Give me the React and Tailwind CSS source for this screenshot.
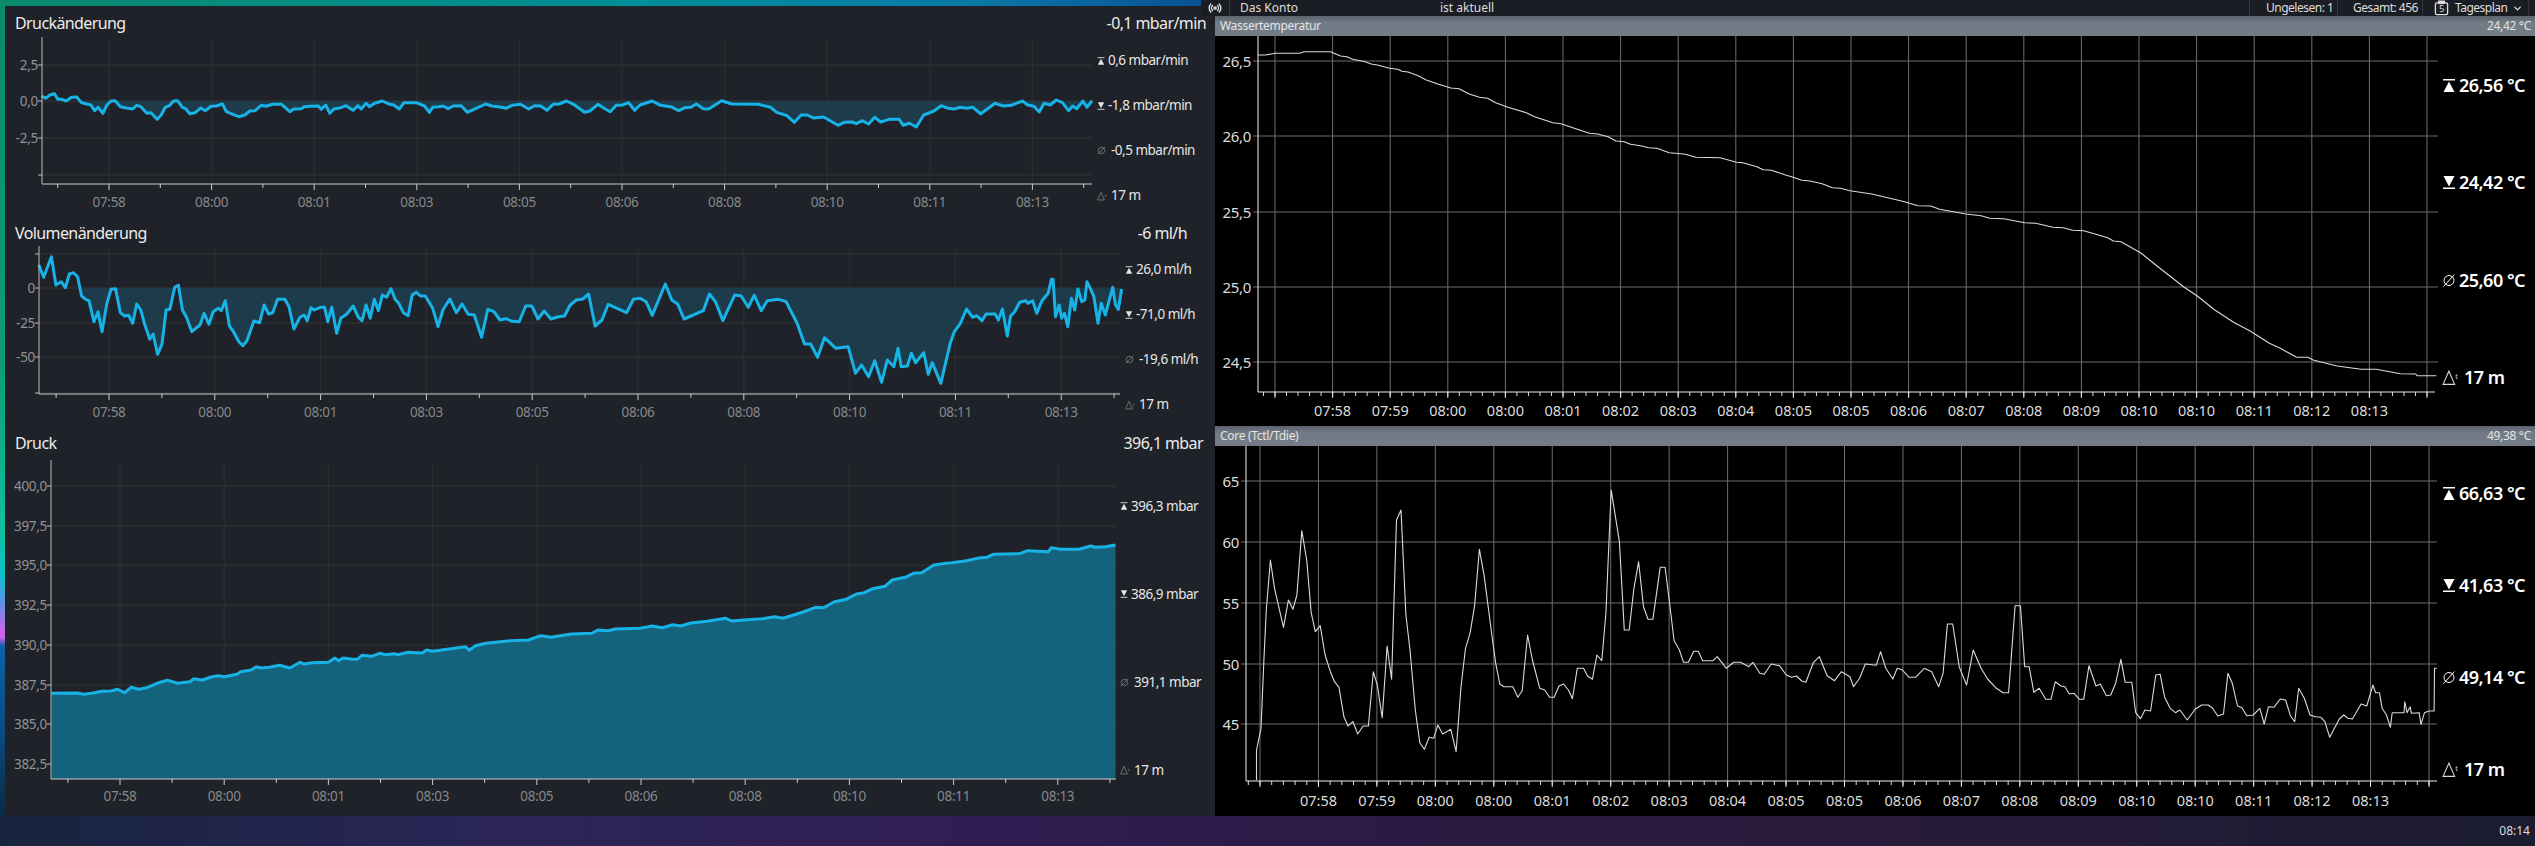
import React from 'react';
import { Radio, ChevronDown } from 'lucide-react';

// helper: points were read off 3x crops, x gets its own scale
const trace = (pts, ox, oy, sx) => pts.map(([x, y]) => [ox + x / sx, oy + y / 3]);
const toPath = pts => pts.map(([x, y]) => `${x.toFixed(1)},${y.toFixed(1)}`).join(' ');

const pressureRate = [
  ...trace([[102,288],[112,295],[122,285],[133,281],[142,298],[152,298],[162,303],[175,292],[188,291],[200,308],[215,313],[222,314],[232,332],[240,322],[252,340],[262,315],[272,303],[282,302],[295,320],[310,324],[325,327],[335,316],[345,320],[360,340],[370,338],[385,358],[395,345],[405,322],[415,317],[425,303],[435,302],[447,322],[455,326],[465,341],[478,338],[492,324],[503,332],[517,319],[530,318],[545,312],[555,335],[570,343],[585,350],[600,345],[612,333],[625,332],[640,316],[652,319],[668,313],[690,313],[710,335],[720,327],[738,326],[745,320],[760,319],[780,318],[787,328],[798,315],[808,340],[818,327],[835,323],[848,317],[865,331],[877,317],[885,327],[897,310],[905,320],[918,310],[937,303],[955,313],[965,315],[978,327],[990,308],[1020,308],[1040,318],[1052,337],[1060,322],[1075,320],[1085,318],[1098,326],[1110,318],[1130,317],[1145,337],[1165,326],[1190,312],[1205,318],[1225,321],[1240,325],[1255,316],[1275,313],[1295,327],[1310,317],[1325,318],[1340,331],[1355,313],[1370,312],[1388,303],[1405,313],[1432,337],[1445,333],[1465,313],[1480,325],[1495,335],[1510,316],[1525,315],[1540,308],[1555,331],[1568,315]], 0, 0, 2.45),
  ...trace([[30,303],[50,316],[75,320],[95,332],[110,323],[125,322],[138,312],[155,326],[168,327],[180,318],[200,302],[225,312],[290,313],[320,322],[335,337],[360,347],[378,367],[395,345],[410,345],[425,354],[450,351],[470,365],[485,376],[500,367],[520,366],[530,371],[545,362],[560,372],[575,352],[590,366],[610,358],[635,358],[645,376],[660,370],[677,381],[695,345],[720,333],[738,317],[755,325],[770,327],[785,322],[800,325],[815,322],[835,341],[850,328],[870,310],[890,318],[910,316],[937,303],[950,315],[965,319],[978,336],[990,310],[1005,315],[1020,300],[1035,308],[1050,332],[1060,318],[1070,326],[1085,303],[1095,322],[1108,302]], 640, 0, 2.45),
];

const volumeRate = [
  ...trace([[95,165],[107,202],[126,140],[137,225],[150,215],[160,233],[170,192],[180,188],[190,200],[200,258],[210,268],[218,272],[230,335],[240,305],[250,365],[262,280],[272,238],[283,236],[295,308],[305,318],[315,316],[325,340],[335,282],[345,300],[355,345],[367,388],[375,372],[386,433],[397,402],[407,300],[416,298],[428,232],[437,226],[447,300],[457,322],[470,365],[490,345],[500,310],[512,343],[522,305],[535,295],[542,302],[552,272],[562,348],[572,365],[585,395],[595,407],[605,392],[622,333],[636,338],[647,285],[658,312],[668,308],[680,268],[698,268],[708,290],[720,357],[735,322],[745,315],[753,332],[762,293],[770,300],[785,292],[795,292],[803,335],[813,292],[825,370],[835,325],[850,312],[865,288],[878,322],[887,332],[897,285],[907,325],[917,268],[927,302],[937,255],[947,262],[958,236],[968,268],[977,280],[988,308],[1000,317],[1010,255],[1020,247],[1030,258],[1042,258],[1060,295],[1073,350],[1085,300],[1102,267],[1118,308],[1132,282],[1147,313],[1162,315],[1180,382],[1195,298],[1210,305],[1225,330],[1240,326],[1255,334],[1272,335],[1288,288],[1303,288],[1318,327],[1333,303],[1350,327],[1368,320],[1383,318],[1397,285],[1412,270],[1428,267],[1442,252],[1458,348],[1475,330],[1490,283],[1535,308],[1552,268],[1568,265]], 0, 210, 2.45),
  ...trace([[15,275],[30,316],[62,222],[78,270],[92,282],[108,327],[125,318],[155,302],[170,252],[185,275],[203,332],[232,255],[248,258],[265,292],[280,256],[297,302],[312,272],[340,268],[358,275],[385,340],[403,402],[418,402],[435,442],[452,383],[480,415],[510,410],[528,490],[543,465],[560,500],[575,452],[592,517],[606,450],[622,470],[632,415],[640,470],[655,468],[665,430],[675,458],[695,428],[706,493],[716,458],[737,520],[760,400],[770,365],[785,340],[800,297],[815,322],[825,317],[838,332],[848,312],[870,312],[878,330],[888,297],[900,378],[908,318],[918,305],[930,277],[945,272],[950,280],[962,272],[972,310],[985,272],[1000,250],[1008,208],[1012,208],[1018,320],[1027,285],[1033,325],[1040,310],[1048,350],[1057,265],[1065,300],[1073,237],[1082,275],[1090,270],[1095,215],[1105,240],[1112,260],[1122,340],[1130,280],[1140,315],[1158,232],[1165,285],[1172,298],[1180,237]], 640, 210, 2.45),
];

const pressure = [
  ...trace([[126,790],[190,789],[205,793],[225,790],[250,784],[272,783],[288,778],[305,788],[322,772],[340,778],[360,773],[385,760],[410,751],[435,760],[465,755],[475,746],[495,750],[520,740],[535,737],[550,740],[580,733],[590,725],[615,720],[628,710],[640,714],[660,712],[685,706],[710,714],[735,697],[745,702],[765,698],[805,697],[820,684],[830,692],[840,684],[860,687],[875,688],[887,676],[910,679],[930,670],[945,674],[965,671],[975,674],[1000,667],[1035,669],[1045,660],[1060,664],[1100,657],[1140,650],[1150,660],[1165,647],[1190,640],[1250,632],[1295,630],[1325,617],[1350,622],[1400,612],[1450,610],[1465,600],[1490,602],[1508,597],[1568,595]], 0, 430, 2.45),
  ...trace([[30,588],[55,593],[80,584],[100,588],[125,579],[165,574],[210,565],[225,573],[255,570],[300,566],[330,560],[350,565],[400,546],[430,532],[450,533],[475,516],[505,508],[530,492],[550,488],[570,476],[600,469],[618,450],[650,442],[670,430],[690,428],[720,405],[750,400],[765,398],[800,392],[830,384],[850,382],[865,373],[890,372],[930,371],[950,362],[1000,365],[1008,353],[1030,358],[1075,358],[1105,348],[1115,352],[1140,350],[1165,345]], 640, 430, 2.45),
];

const waterTemp = [
  ...trace([[117,165],[135,165],[160,160],[220,160],[230,155],[295,155],[320,168],[335,170],[350,178],[380,185],[395,192],[410,195],[440,205],[460,208],[470,214],[485,216],[510,227],[530,240],[560,253],[590,264],[610,266],[635,282],[660,292],[680,295],[700,308],[730,322],[775,338],[795,350],[840,368],[860,371],[900,388],[930,400],[950,402],[975,410],[995,423],[1015,425],[1030,433],[1055,437],[1075,443],[1095,445],[1125,458],[1140,460],[1165,463],[1190,472],[1250,473],[1290,487],[1305,488],[1340,500],[1355,509],[1375,511],[1410,525],[1425,530],[1450,541],[1470,543],[1500,551],[1525,563],[1545,565],[1568,572]], 1210, 0, 2.45),
  ...trace([[50,72],[125,95],[155,107],[185,108],[205,118],[265,132],[300,137],[320,145],[352,146],[400,158],[425,160],[465,172],[488,173],[510,181],[535,182],[590,203],[603,213],[620,215],[665,248],[705,290],[765,352],[795,378],[835,420],[880,458],[915,482],[960,520],[985,535],[1022,562],[1048,562],[1060,570],[1115,588],[1170,598],[1205,598],[1260,611],[1295,612],[1298,617],[1342,617]], 1850, 170, 2.289),
];

const coreTemp = [
  ...trace([[114,1080],[114,990],[125,925],[132,720],[138,570],[148,420],[158,505],[180,622],[192,540],[203,568],[213,525],[225,332],[237,420],[248,578],[258,635],[270,617],[282,705],[295,755],[305,785],[316,802],[328,890],[338,918],[350,905],[362,942],[375,918],[388,918],[400,755],[410,795],[422,893],[434,678],[445,778],[457,300],[468,270],[480,585],[490,690],[503,870],[514,968],[525,988],[537,952],[548,955],[558,915],[570,942],[590,928],[603,995],[615,800],[626,685],[637,640],[648,560],[660,388],[672,470],[690,640],[700,730],[710,792],[720,800],[742,800],[754,832],[765,812],[778,645],[790,720],[808,805],[820,810],[832,832],[843,832],[855,798],[866,792],[878,810],[888,836],[900,745],[915,745],[925,768],[937,778],[948,705],[960,722],[970,580],[983,210],[1003,365],[1015,630],[1027,630],[1038,510],[1050,425],[1062,560],[1073,598],[1085,598],[1103,442],[1115,442],[1125,540],[1137,662],[1150,690],[1160,727],[1172,727],[1185,694],[1196,694],[1207,722],[1232,722],[1243,710],[1265,745],[1283,727],[1300,727],[1320,740],[1330,727],[1347,760],[1358,763],[1375,732],[1395,737],[1412,765],[1425,772],[1437,768],[1450,783],[1460,787],[1478,728],[1493,710],[1512,767],[1530,782],[1547,755],[1568,770]], 1210, 420, 2.45),
  ...trace([[8,800],[22,775],[35,732],[60,736],[70,695],[82,745],[98,777],[108,745],[120,750],[135,772],[150,772],[170,745],[187,755],[203,800],[213,760],[223,612],[235,612],[250,740],[267,795],[282,690],[300,745],[315,777],[335,805],[350,818],[363,818],[378,557],[390,557],[400,740],[410,740],[421,817],[433,805],[448,838],[460,838],[470,785],[483,798],[492,800],[502,822],[513,820],[525,838],[535,838],[547,737],[563,798],[573,792],[587,827],[597,825],[608,790],[620,718],[630,787],[645,787],[654,878],[665,896],[675,870],[688,873],[700,765],[710,763],[720,830],[733,865],[745,878],[755,870],[772,900],[790,868],[805,855],[820,855],[830,865],[842,888],[855,882],[865,760],[875,790],[887,858],[897,863],[908,887],[923,885],[938,865],[948,912],[958,860],[970,862],[985,837],[997,840],[1008,887],[1018,905],[1027,805],[1040,835],[1053,885],[1065,890],[1078,892],[1087,905],[1098,952],[1120,897],[1130,885],[1140,895],[1150,897],[1170,852],[1183,858],[1197,795],[1203,818],[1212,818],[1218,865],[1228,885],[1237,922],[1241,878],[1268,878],[1270,845],[1275,878],[1282,860],[1285,880],[1303,878],[1307,913],[1315,878],[1325,873],[1337,873],[1338,745],[1343,745]], 1850, 420, 2.289),
];

const leftTimes = ['07:58', '08:00', '08:01', '08:03', '08:05', '08:06', '08:08', '08:10', '08:11', '08:13'];
const rightTimes = ['07:58', '07:59', '08:00', '08:00', '08:01', '08:02', '08:03', '08:04', '08:05', '08:05', '08:06', '08:07', '08:08', '08:09', '08:10', '08:10', '08:11', '08:12', '08:13'];

function StatIcon({ kind, className }) {
  if (kind === 'delta') {
    return (
      <svg viewBox="0 0 18 16" className={className} fill="none" stroke="currentColor" strokeWidth="1">
        <path d="M1 14.5 L6.5 2 L12 14.5 Z" />
        <text x="12.5" y="9" fontSize="7" fill="currentColor" stroke="none">t</text>
      </svg>
    );
  }
  if (kind === 'avg') {
    return (
      <svg viewBox="0 0 14 14" className={className} fill="none" stroke="currentColor" strokeWidth="1">
        <circle cx="7" cy="7" r="5" />
        <path d="M1.5 13 L12.5 1" />
      </svg>
    );
  }
  return (
    <svg viewBox="0 0 14 14" className={className} fill="currentColor">
      {kind === 'max' ? (
        <>
          <rect x="1" y="0.5" width="12" height="1.5" />
          <path d="M7 3 L12.5 13.5 L1.5 13.5 Z" />
        </>
      ) : (
        <>
          <path d="M1.5 0.5 L12.5 0.5 L7 11 Z" />
          <rect x="1" y="12" width="12" height="1.5" />
        </>
      )}
    </svg>
  );
}

function DarkChart({ box, axisX, axisTop, axisBottom, right, yTicks, xStart, xStep, line, baseline, fill, labelY, clipId }) {
  const [x, y, w, h] = box;
  const majors = leftTimes.map((_, i) => xStart + i * xStep);
  const minors = [];
  for (let m = xStart - xStep / 2; m <= right; m += xStep) minors.push(m);
  const area = `${line[0][0]},${baseline} ${toPath(line)} ${line[line.length - 1][0]},${baseline}`;
  return (
    <svg viewBox={`${x} ${y} ${w} ${h}`} width={w} height={h} className="shrink-0">
      <clipPath id={clipId}>
        <rect x={axisX} y={fill === '#15627c' ? axisTop : baseline} width={right - axisX} height={axisBottom - axisTop} />
      </clipPath>
      {yTicks.map(t => (
        <line key={t[0]} x1={axisX} x2={right} y1={t[0]} y2={t[0]} stroke="#282b30" strokeWidth="2" />
      ))}
      {majors.map(m => (
        <line key={m} x1={m} x2={m} y1={axisTop + 3} y2={axisBottom} stroke="#2a2d32" strokeWidth="1.5" />
      ))}
      <polygon points={area} fill={fill} clipPath={`url(#${clipId})`} />
      <polyline points={toPath(line)} fill="none" stroke="#17b2e6" strokeWidth="3" strokeLinejoin="round" />
      <line x1={axisX} x2={axisX} y1={axisTop} y2={axisBottom} stroke="#b9bcbf" />
      <line x1={axisX} x2={right} y1={axisBottom} y2={axisBottom} stroke="#c9ccce" />
      {yTicks.map(t => (
        <g key={t[0]}>
          <line x1={axisX - 4} x2={axisX} y1={t[0]} y2={t[0]} stroke="#b9bcbf" />
          <text x={axisX - 4} y={t[0]} textAnchor="end" dominantBaseline="central" fontSize="13.5" letterSpacing="-0.3" fill="#8f9296">{t[1]}</text>
        </g>
      ))}
      {minors.map(m => (
        <line key={m} x1={m} x2={m} y1={axisBottom} y2={axisBottom + 4} stroke="#c9ccce" />
      ))}
      {majors.map((m, i) => (
        <g key={m}>
          <line x1={m} x2={m} y1={axisBottom} y2={axisBottom + 6} stroke="#c9ccce" />
          <text x={m} y={labelY} textAnchor="middle" dominantBaseline="central" fontSize="13.5" letterSpacing="-0.3" fill="#85888c">{leftTimes[i]}</text>
        </g>
      ))}
    </svg>
  );
}

function BlackChart({ box, axisX, axisTop, axisBottom, right, yTicks, xStart, xStep, line, labelY, tickEnd }) {
  const [x, y, w, h] = box;
  const verticals = Array.from({ length: 21 }, (_, i) => xStart + i * xStep);
  const minors = [];
  for (let m = xStart - xStep / 5; m < tickEnd; m += xStep / 5) minors.push(m);
  return (
    <svg viewBox={`${x} ${y} ${w} ${h}`} width={w} height={h} className="shrink-0">
      {verticals.map(v => (
        <line key={v} x1={v} x2={v} y1={axisTop} y2={axisBottom} stroke="#6e6e6e" />
      ))}
      {yTicks.map(t => (
        <g key={t[0]}>
          <line x1={axisX - 5} x2={right} y1={t[0]} y2={t[0]} stroke="#6e6e6e" />
          <text x={axisX - 7} y={t[0]} textAnchor="end" dominantBaseline="central" fontSize="15" letterSpacing="-0.3" fill="#dcdcdc">{t[1]}</text>
        </g>
      ))}
      <polyline points={toPath(line)} fill="none" stroke="#dcdcdc" strokeWidth="1.1" strokeLinejoin="round" />
      <line x1={axisX} x2={axisX} y1={axisTop} y2={axisBottom} stroke="#f0f0f0" />
      <line x1={axisX} x2={tickEnd + 7} y1={axisBottom} y2={axisBottom} stroke="#f0f0f0" />
      {minors.map(m => (
        <line key={m} x1={m} x2={m} y1={axisBottom} y2={axisBottom + 4} stroke="#e0e0e0" />
      ))}
      {verticals.map(v => (
        <line key={v} x1={v} x2={v} y1={axisBottom} y2={axisBottom + 6} stroke="#e8e8e8" />
      ))}
      {rightTimes.map((t, i) => (
        <text key={i} x={xStart + (i + 1) * xStep} y={labelY} textAnchor="middle" dominantBaseline="central" fontSize="14.5" fill="#dcdcdc">{t}</text>
      ))}
    </svg>
  );
}

function LeftStats({ rows, rowClass, padClass }) {
  return (
    <div className={`flex flex-col ${padClass}`}>
      {rows.map(([kind, text]) => (
        <div key={kind} className={`flex items-center gap-[3px] text-[13.5px] tracking-[-0.5px] text-[#e6e6e6] whitespace-nowrap ${rowClass}`}>
          <StatIcon kind={kind} className={kind === 'delta' ? 'w-[11px] h-[10px] text-[#9a9a9a]' : kind === 'avg' ? 'w-[9px] h-[9px] mr-[2px] text-[#9a9a9a]' : 'w-[8px] h-[10px] text-[#e6e6e6]'} />
          <span>{text}</span>
        </div>
      ))}
    </div>
  );
}

function RightStats({ rows, rowClass, padClass }) {
  return (
    <div className={`flex flex-col ${padClass}`}>
      {rows.map(([kind, text]) => (
        <div key={kind} className={`flex items-center gap-[3px] text-[18px] font-semibold tracking-[-0.5px] text-white whitespace-nowrap ${rowClass}`}>
          <StatIcon kind={kind} className={kind === 'delta' ? 'w-[19px] h-[17px] font-normal text-[#d8d8d8]' : 'w-[14px] h-[15px] text-white'} />
          <span>{text}</span>
        </div>
      ))}
    </div>
  );
}

function LeftHeader({ title, value, padClass }) {
  return (
    <div className={`flex h-5 items-center justify-between pl-[10px] text-[16px] tracking-[-0.6px] text-[#ececec] ${padClass}`}>
      <span>{title}</span>
      <span>{value}</span>
    </div>
  );
}

function TitleBar({ title, value }) {
  return (
    <div className="flex h-5 items-center justify-between bg-[linear-gradient(180deg,#5c656f,#737c86_35%)] pl-[5px] pr-[4px] text-[12px] tracking-[-0.3px] text-[#e4e4e4]">
      <span>{title}</span>
      <span>{value}</span>
    </div>
  );
}

function TopBar() {
  return (
    <div className="relative z-10 -mt-[6px] -ml-[14px] flex h-4 items-center bg-[#1b1d24] text-[12px] text-[#dedede]">
      <div className="flex h-full w-[29px] items-center justify-center border-r border-[#34363c]">
        <Radio className="h-[14px] w-[16px]" strokeWidth={2.4} />
      </div>
      <span className="ml-[10px] w-[200px]">Das Konto</span>
      <span>ist aktuell</span>
      <div className="ml-auto mr-[6px] flex h-full items-center tracking-[-0.5px]">
        <span className="flex h-full w-[88px] items-center border-l border-[#34363c] pl-[16px]">Ungelesen: 1</span>
        <span className="flex h-full w-[85px] items-center border-l border-[#34363c] pl-[15px]">Gesamt: 456</span>
        <div className="flex h-full w-[107px] items-center border-x border-[#34363c] pl-[11px]">
          <svg viewBox="0 0 16 16" className="h-[16px] w-[15px]" fill="none" stroke="currentColor" strokeWidth="1.4">
            <rect x="1.5" y="2.5" width="13" height="12.5" rx="1.5" />
            <rect x="5" y="0.7" width="6" height="2.4" fill="currentColor" />
            <text x="8" y="12.5" textAnchor="middle" fontSize="10" fill="currentColor" stroke="none">5</text>
          </svg>
          <span className="ml-[6px]">Tagesplan</span>
          <ChevronDown className="ml-[5px] h-[11px] w-[11px]" strokeWidth={3} />
        </div>
      </div>
    </div>
  );
}

export default function App() {
  return (
    <div className="flex h-[846px] w-[2535px] flex-col overflow-hidden font-['Noto_Sans',sans-serif] bg-[#1f2228]">
      <div className="h-[6px] shrink-0 bg-[linear-gradient(90deg,#0a8a6c,#008f98_25%,#0a7aa8_38%,#0a4f92_48%,#0a3f80)]" />
      <div className="flex h-[810px] shrink-0">
        <div className="w-[5px] shrink-0 bg-[linear-gradient(180deg,#0a8a6c_0%,#0b9e78_45%,#10c0a0_65%,#08c0c8_70%,#4a9ae8_73%,#c864e8_77%,#c864e8_78%,#0c62a8_79%,#0a4a80_90%,#0a2a42_100%)]" />

        <div className="flex w-[1210px] shrink-0 flex-col bg-[#1f2228] pt-[7px]">
          <section className="h-[210px]">
            <LeftHeader title="Druckänderung" value="-0,1 mbar/min" padClass="pr-[9px]" />
            <div className="flex">
              <DarkChart
                box={[5, 33, 1092, 190]} axisX={42} axisTop={37} axisBottom={184} right={1092}
                yTicks={[[65, '2,5'], [101, '0,0'], [138, '-2,5'], [175, '']]}
                xStart={109} xStep={102.6} line={pressureRate} baseline={101} fill="#1d3b4a" labelY={202} clipId="clip-a"
              />
              <LeftStats
                padClass="pt-[5px]" rowClass="h-[45px]"
                rows={[['max', '0,6 mbar/min'], ['min', '-1,8 mbar/min'], ['avg', '-0,5 mbar/min'], ['delta', '17 m']]}
              />
            </div>
          </section>

          <section className="h-[210px]">
            <LeftHeader title="Volumenänderung" value="-6 ml/h" padClass="pr-[28px]" />
            <div className="flex">
              <DarkChart
                box={[5, 243, 1120, 190]} axisX={39} axisTop={246} axisBottom={394} right={1120}
                yTicks={[[254, ''], [288, '0'], [323, '-25'], [357, '-50'], [393, '']]}
                xStart={109} xStep={105.8} line={volumeRate} baseline={288} fill="#1d3b4a" labelY={412} clipId="clip-b"
              />
              <LeftStats
                padClass="pt-[4px]" rowClass="h-[45px]"
                rows={[['max', '26,0 ml/h'], ['min', '-71,0 ml/h'], ['avg', '-19,6 ml/h'], ['delta', '17 m']]}
              />
            </div>
          </section>

          <section className="flex-1">
            <LeftHeader title="Druck" value="396,1 mbar" padClass="pr-[12px]" />
            <div className="flex">
              <DarkChart
                box={[5, 453, 1115, 360]} axisX={51} axisTop={460} axisBottom={779} right={1116}
                yTicks={[[486, '400,0'], [526, '397,5'], [565, '395,0'], [605, '392,5'], [645, '390,0'], [685, '387,5'], [724, '385,0'], [764, '382,5']]}
                xStart={120} xStep={104.2} line={pressure} baseline={779} fill="#15627c" labelY={796} clipId="clip-c"
              />
              <LeftStats
                padClass="pt-[9px]" rowClass="h-[88px]"
                rows={[['max', '396,3 mbar'], ['min', '386,9 mbar'], ['avg', '391,1 mbar'], ['delta', '17 m']]}
              />
            </div>
          </section>
        </div>

        <div className="flex w-[1320px] shrink-0 flex-col">
          <TopBar />
          <TitleBar title="Wassertemperatur" value="24,42 °C" />
          <div className="flex h-[390px] bg-black">
            <BlackChart
              box={[1215, 36, 1227, 390]} axisX={1258} axisTop={36} axisBottom={392} right={2438}
              yTicks={[[61, '26,5'], [136, '26,0'], [212, '25,5'], [287, '25,0'], [362, '24,5']]}
              xStart={1275} xStep={57.6} line={waterTemp} labelY={410} tickEnd={2428}
            />
            <RightStats
              padClass="pt-[1px]" rowClass="h-[97.5px]"
              rows={[['max', '26,56 °C'], ['min', '24,42 °C'], ['avg', '25,60 °C'], ['delta', '17 m']]}
            />
          </div>
          <TitleBar title="Core (Tctl/Tdie)" value="49,38 °C" />
          <div className="flex h-[370px] bg-black">
            <BlackChart
              box={[1215, 446, 1227, 370]} axisX={1246} axisTop={446} axisBottom={781} right={2437}
              yTicks={[[481, '65'], [542, '60'], [603, '55'], [664, '50'], [724, '45']]}
              xStart={1260} xStep={58.45} line={coreTemp} labelY={800} tickEnd={2430}
            />
            <RightStats
              padClass="pt-[1px]" rowClass="h-[92.6px]"
              rows={[['max', '66,63 °C'], ['min', '41,63 °C'], ['avg', '49,14 °C'], ['delta', '17 m']]}
            />
          </div>
        </div>
      </div>
      <div className="flex flex-1 items-center justify-end bg-[linear-gradient(90deg,#17243f,#2b2557_20%,#2f1f55_35%,#2b1b44_55%,#2a1b3c_72%,#1b1c30)] pr-[5px] text-[12px] text-[#dcdcdc]">
        08:14
      </div>
    </div>
  );
}
